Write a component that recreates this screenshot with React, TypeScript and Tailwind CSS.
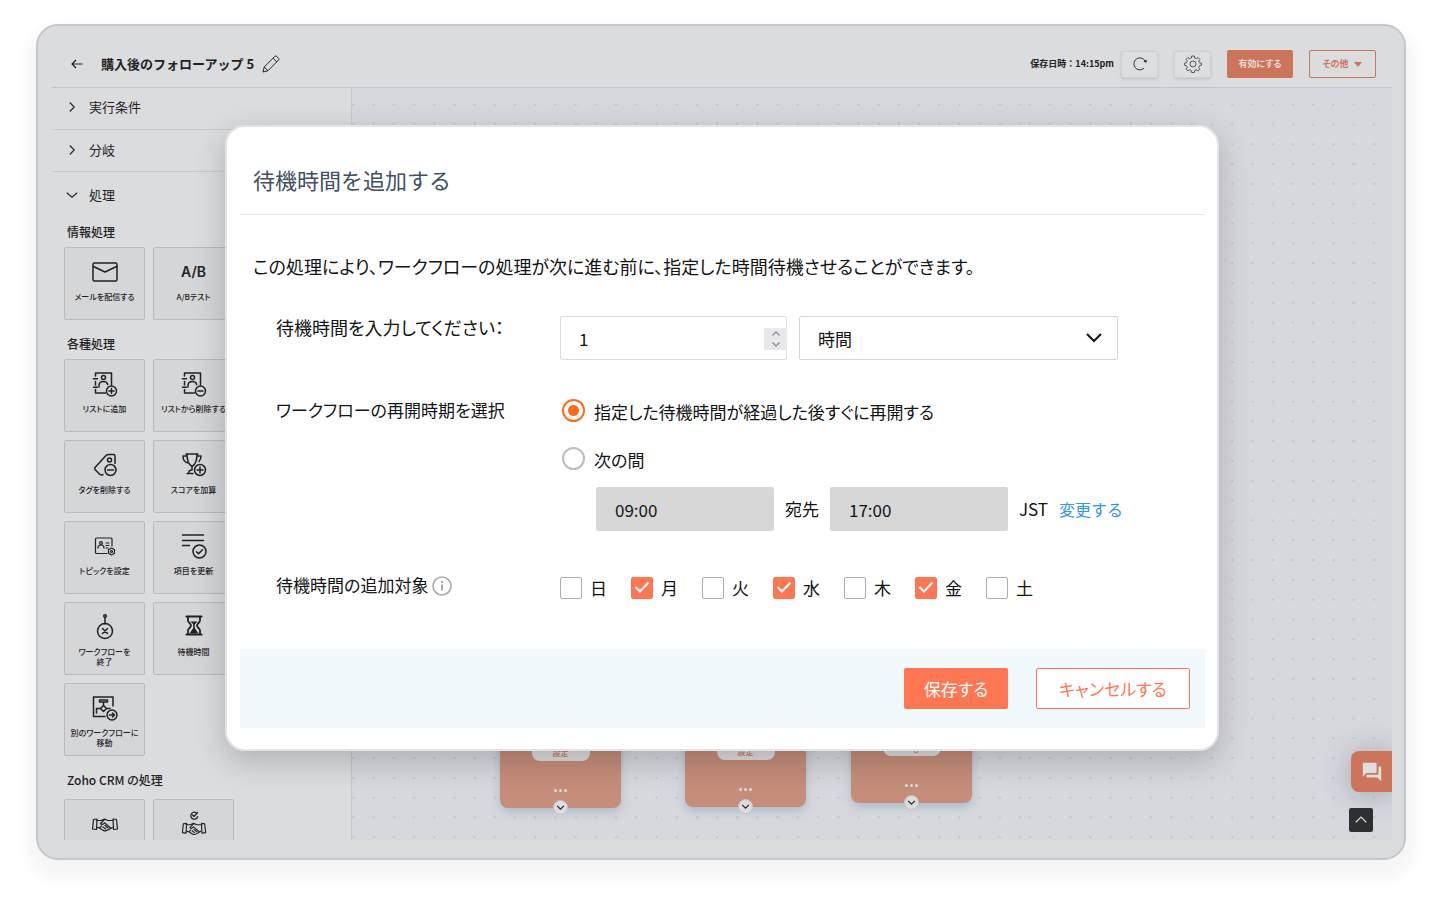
import { useState, type ReactNode } from "react";

interface IconProps {
  className?: string;
  children: ReactNode;
}

const Icon = ({ className = "w-7 h-7", children }: IconProps) => (
  <svg
    viewBox="0 0 28 28"
    className={className}
    fill="none"
    stroke="currentColor"
    strokeWidth="1.5"
    strokeLinecap="round"
    strokeLinejoin="round"
    aria-hidden="true"
  >
    {children}
  </svg>
);

const Chevron = ({ className, d = "M2 5l6 6 6-6", width = 1.5 }: { className: string; d?: string; width?: number }) => (
  <svg viewBox="0 0 16 16" className={className} fill="none" stroke="currentColor" strokeWidth={width} aria-hidden="true">
    <path d={d} />
  </svg>
);

const MailIcon = () => (
  <Icon>
    <rect x="2" y="5" width="24" height="18" rx="1.5" />
    <path d="M2.5 8.5L14 14l11.5-5.5" />
  </Icon>
);

const listBook = (
  <>
    <path d="M4.500 6V3H20.500v12M4.500 11.500v3.500M4.500 19.500V23h10" />
    <path d="M2.500 8.800h4M2.500 17.200h4" />
    <circle cx="12.5" cy="7.5" r="2" />
    <path d="M8 17v-1.500c0-2.500 2-4 4.500-4 2 0 3.800 1 4.200 3" />
    <circle cx="20.500" cy="21" r="5" />
  </>
);

const ListAddIcon = () => (
  <Icon>
    {listBook}
    <path d="M18 21h5M20.5 18.5v5" />
  </Icon>
);

const ListRemoveIcon = () => (
  <Icon>
    {listBook}
    <path d="M18 21h5" />
  </Icon>
);

const TagRemoveIcon = () => (
  <Icon>
    <path d="M12 23.500l-1 .5a2 2 0 0 1-2-.5l-5-5a1.500 1.500 0 0 1 0-2L15 4.500c.8-.8 1.700-1 3-1h4.500c1 0 1.500.5 1.500 1.500v7.500" />
    <circle cx="18.500" cy="9" r="2" />
    <circle cx="19.500" cy="19" r="5.500" />
    <path d="M16.500 19h6" />
  </Icon>
);

const ScoreAddIcon = () => (
  <Icon>
    <path d="M6 3h12M7 3c0 7 1.500 10.500 5 12.500C15.500 13.500 17 10 17 3M7 5H3c0 4 1.500 6.500 5.500 7M17 5h4c0 2.500-.5 4-2 5.500M12 15.500V19M7 22.500h6M8.500 22.500c0-2 1-3.500 3.500-3.500" />
    <circle cx="20" cy="19" r="5.500" />
    <path d="M17 19h6M20 16v6" />
  </Icon>
);

const TopicIcon = () => (
  <Icon>
    <g strokeWidth="1.200">
      <path d="M16 21.500H5.500a1 1 0 0 1-1-1V7a1 1 0 0 1 1-1H20a1 1 0 0 1 1 1v7" />
      <circle cx="10" cy="11" r="1.400" />
      <path d="M7 16c0-2 1.200-3 3-3s3 1 3 3M15 11h3M15 13.500h3M15 16h2" />
      <path d="M20.500 16l3 1.700v3.500l-3 1.700-3-1.700v-3.500z" />
      <circle cx="20.500" cy="19.500" r="1" />
    </g>
  </Icon>
);

const FieldUpdateIcon = () => (
  <Icon>
    <path d="M2.500 3h21M2.500 8.500h21M2.500 13.500h7" />
    <circle cx="19.500" cy="19.500" r="6.500" />
    <path d="M16.500 19.700l2 2 4-4" />
  </Icon>
);

const EndWorkflowIcon = () => (
  <Icon>
    <circle cx="14" cy="3" r="1.300" />
    <path d="M14 4.500V11" />
    <circle cx="14" cy="18" r="7.500" />
    <path d="M11.500 15.500l5 5M16.500 15.500l-5 5" />
  </Icon>
);

const HourglassIcon = () => (
  <Icon>
    <path d="M6.500 3.500h15M6.500 21.500h15" strokeWidth="2.200" />
    <path d="M8 4v3.500c0 2 3 3 3 5s-3 3-3 5V21M20 4v3.500c0 2-3 3-3 5s3 3 3 5V21" strokeWidth="1.800" />
    <path d="M10.500 8.500h7L14 12zM14 14l-4.500 6.500h9z" fill="currentColor" stroke="none" />
    <path d="M14 11v5" />
  </Icon>
);

const MoveWorkflowIcon = () => (
  <Icon>
    <path d="M22 12V3H2.500v19.500H14" />
    <path d="M8.500 6h8v2h-8zM12.500 8v4M12.500 11.500l3 3-3 3-3-3zM9.500 14.500H5.500V19M15.500 14.500H19" />
    <circle cx="21" cy="21" r="5" />
    <path d="M18.500 21h5M21.500 19l2 2-2 2" />
  </Icon>
);

const hands = (
  <>
    <path d="M2.500 9.500l3.500-.5-.5 10.500-4-.5zM25.500 9.500l-3.500-.5.5 10.500 4-.5z" />
    <path d="M6 10.500h4l3.500-1.500 3.500 1.500h5M5.800 17.500l2 .2 5 3c1.500.7 2.200-.3 3.500-.5 1.500 0 1.500-1 3-1.500l2-1.200M13.500 9.500l-4 4c.8 1.500 2.500 1 4-.7l6 5.200M12 17l2.500 2M14 15.500l3 2.500M9 17.500l1.500-1.500" />
  </>
);

const HandshakeIcon = () => (
  <Icon>
    <g strokeWidth="1.200">{hands}</g>
  </Icon>
);

const HandshakeCheckIcon = () => (
  <Icon>
    <g strokeWidth="1.200">
      <g transform="translate(1 5) scale(.93)">{hands}</g>
      <path d="M17 3.500a3.500 3.500 0 1 0 .7 3M12.500 5l1.500 1.500 3.500-4" />
    </g>
  </Icon>
);

const AbIcon = () => <span className="font-['Inter'] text-sm font-semibold">A/B</span>;

interface Action {
  name: string;
  caption?: string;
  icon: ReactNode;
}

const infoActions: Action[] = [
  { name: "mail", caption: "メールを配信する", icon: <MailIcon /> },
  { name: "ab-test", caption: "A/Bテスト", icon: <AbIcon /> },
];

const generalActions: Action[] = [
  { name: "list-add", caption: "リストに追加", icon: <ListAddIcon /> },
  { name: "list-remove", caption: "リストから削除する", icon: <ListRemoveIcon /> },
  { name: "tag-remove", caption: "タグを削除する", icon: <TagRemoveIcon /> },
  { name: "score-add", caption: "スコアを加算", icon: <ScoreAddIcon /> },
  { name: "topic", caption: "トピックを設定", icon: <TopicIcon /> },
  { name: "field-update", caption: "項目を更新", icon: <FieldUpdateIcon /> },
  { name: "end", caption: "ワークフローを\n終了", icon: <EndWorkflowIcon /> },
  { name: "delay", caption: "待機時間", icon: <HourglassIcon /> },
  { name: "move", caption: "別のワークフローに\n移動", icon: <MoveWorkflowIcon /> },
];

const crmActions: Action[] = [
  { name: "crm-deal", icon: <HandshakeIcon /> },
  { name: "crm-deal-check", icon: <HandshakeCheckIcon /> },
];

interface ActionGroupProps {
  title: string;
  actions: Action[];
  gridClass?: string;
}

const ActionGroup = ({ title, actions, gridClass = "mt-[3px]" }: ActionGroupProps) => (
  <section>
    <h3 className="px-[15px] text-xs leading-6 font-medium">{title}</h3>
    <div className={`mb-3 flex flex-wrap gap-2 pr-24 pl-3 ${gridClass}`}>
      {actions.map((action) => (
        <button
          key={action.name}
          aria-label={action.caption ?? action.name}
          className="flex h-[73px] w-[81px] flex-col items-center rounded-xs border border-[#b9babd] bg-[#d5d6d8]"
        >
          <span className="flex h-12 shrink-0 items-center justify-center">{action.icon}</span>
          {action.caption && (
            <span className="-mt-1 text-[8px] leading-[10px] font-medium whitespace-pre">{action.caption}</span>
          )}
        </button>
      ))}
    </div>
  </section>
);

const Sidebar = () => (
  <aside className="w-[300px] shrink-0 overflow-hidden border-r border-[#c6c7cc]">
    <button className="flex h-[42px] w-full items-center gap-[11px] border-b border-[#c9cacd] pb-1 pl-3.5 text-[13px]">
      <Chevron className="h-3 w-3" d="M5 2l6 6-6 6" />
      実行条件
    </button>
    <button className="flex h-[42px] w-full items-center gap-[11px] border-b border-[#c9cacd] pb-0.5 pl-3.5 text-[13px]">
      <Chevron className="h-3 w-3" d="M5 2l6 6-6 6" />
      分岐
    </button>
    <button className="flex h-12 w-full items-center gap-[11px] pb-0.5 pl-3.5 text-[13px]">
      <Chevron className="h-3 w-3" d="M1 5l7 6 7-6" />
      処理
    </button>
    <ActionGroup title="情報処理" actions={infoActions} />
    <ActionGroup title="各種処理" actions={generalActions} />
    <ActionGroup title="Zoho CRM の処理" actions={crmActions} gridClass="mt-[7px]" />
  </aside>
);

const TopBar = () => (
  <header className="flex h-[47px] items-center border-b border-[#c3c4ca] pr-4 pl-[19px]">
    <button aria-label="戻る">
      <svg viewBox="0 0 12 12" className="h-3 w-3" fill="none" stroke="currentColor" strokeWidth="1.2" aria-hidden="true">
        <path d="M11.500 6H1M5 2L1 6l4 4" />
      </svg>
    </button>
    <h1 className="ml-[18px] text-[13px] font-bold [font-feature-settings:normal]">購入後のフォローアップ 5</h1>
    <button aria-label="名前を編集" className="ml-2">
      <svg viewBox="0 0 18 18" className="h-[18px] w-[18px]" fill="none" stroke="currentColor" strokeLinejoin="round" aria-hidden="true">
        <path d="M1 17l1.200-5L13 1.200a1 1 0 0 1 1.400 0l2.300 2.300a1 1 0 0 1 0 1.400L6 15.700zM2.200 12L6 15.700M11 3.200l3.800 3.800" />
      </svg>
    </button>
    <span className="ml-auto text-[9px] font-bold [font-feature-settings:normal]">保存日時：14:15pm</span>
    <div className="ml-[7px] flex items-center gap-4">
      <button aria-label="再読み込み" className="flex h-[27px] w-[37px] items-center justify-center rounded-xs border border-[#d0d1d4] bg-[#dddee0] shadow-sm">
        <svg viewBox="0 0 14 14" className="h-3.5 w-3.5" fill="none" stroke="currentColor" strokeWidth=".9" aria-hidden="true">
          <path d="M11 11.200A6 6 0 1 1 12.600 5" />
          <path d="M10.500 4.500l3 1.200.2-3z" fill="currentColor" stroke="none" />
        </svg>
      </button>
      <button aria-label="設定" className="flex h-[27px] w-[37px] items-center justify-center rounded-xs border border-[#d0d1d4] bg-[#dddee0] shadow-sm">
        <svg viewBox="0 0 18 18" className="h-[18px] w-[18px]" fill="none" stroke="currentColor" strokeWidth=".7" strokeLinejoin="round" aria-hidden="true">
          <path d="M7.700 1h2.600l.4 2 1.600.7 1.800-1.200 1.800 1.900-1.200 1.700.7 1.600 2 .4v2.200l-2 .5-.7 1.600 1.200 1.800-1.800 1.800-1.800-1.200-1.600.7-.4 2H7.700l-.4-2-1.600-.7-1.800 1.200-1.800-1.800 1.200-1.800-.7-1.600-2-.5V8.100l2-.4.7-1.600-1.200-1.700 1.800-1.900 1.800 1.200 1.600-.7z" />
          <circle cx="9" cy="9" r="3" />
        </svg>
      </button>
      <button className="h-7 w-[66px] rounded-xs bg-[#cd745b] text-[9px] font-bold text-[#e6dcda]">有効にする</button>
      <button className="flex h-7 w-[67px] items-center justify-center gap-1.5 rounded-xs border border-[#cd745b] text-[9px] font-bold text-[#cd745b]">
        その他
        <svg viewBox="0 0 8 5" className="h-[5px] w-2" fill="currentColor" aria-hidden="true">
          <path d="M0 0h8L4 5z" />
        </svg>
      </button>
    </div>
  </header>
);

const FlowNode = ({ label, className }: { label: string; className: string }) => (
  <div
    className={`absolute flex h-[121px] w-[121px] flex-col items-center rounded-lg bg-[#c58d7a] pt-[52px] shadow-[0_4px_10px_rgba(120,150,175,0.45)] ${className}`}
  >
    <span className="flex h-[22px] w-[58px] shrink-0 items-center justify-center rounded-lg bg-[#dcdcdc] pt-1.5 text-[8px] font-medium text-[#cd745b]">
      {label}
    </span>
    <span className="mt-7 flex gap-[2px]">
      <i className="h-[3px] w-[3px] rounded-full bg-[#dedede]" />
      <i className="h-[3px] w-[3px] rounded-full bg-[#dedede]" />
      <i className="h-[3px] w-[3px] rounded-full bg-[#dedede]" />
    </span>
    <button aria-label="展開" className="absolute -bottom-[7px] flex h-[15px] w-[15px] items-center justify-center rounded-full border border-[#c3c4c6] bg-[#dcdddf]">
      <Chevron className="h-[9px] w-[9px]" d="M2 5l6 6 6-6" width={2} />
    </button>
  </div>
);

const Canvas = () => (
  <main className="relative flex-1 overflow-hidden bg-[#d7d8de]">
    <svg className="absolute inset-0 h-full w-full" aria-hidden="true">
      <defs>
        <pattern id="dots-a" x="-8.500" y="6.700" width="20.2" height="19.8" patternUnits="userSpaceOnUse">
          <circle cx="10" cy="10" r="1.1" fill="#bfc0c7" />
        </pattern>
        <pattern id="dots-b" x="667.700" y="6.700" width="20.25" height="19.8" patternUnits="userSpaceOnUse">
          <circle cx="10" cy="10" r="1.1" fill="#bfc0c7" />
        </pattern>
      </defs>
      <rect width="672" height="100%" fill="url(#dots-a)" />
      <rect x="672" width="100%" height="100%" fill="url(#dots-b)" />
    </svg>
    <FlowNode label="設定" className="top-[599px] left-[148px]" />
    <FlowNode label="設定" className="top-[598px] left-[333px]" />
    <FlowNode label="Tag" className="top-[594px] left-[499px]" />
    <button
      aria-label="チャット"
      className="absolute right-0 bottom-12 flex h-[41px] w-[41px] items-center justify-center rounded-l-lg bg-[#cd745b] shadow-[0_2px_28px_rgba(60,70,90,0.35)]"
    >
      <svg viewBox="0 0 24 24" className="h-[22px] w-[22px]" fill="#dedfe1" aria-hidden="true">
        <path d="M21 6h-2v9H6v2c0 .550.450 1 1 1h11l4 4V7c0-.55-.45-1-1-1zm-4 6V3c0-.55-.45-1-1-1H3c-.55 0-1 .45-1 1v14l4-4h10c.55 0 1-.45 1-1z" />
      </svg>
    </button>
    <button aria-label="上へ戻る" className="absolute right-[19px] bottom-2 flex h-6 w-6 items-center justify-center rounded-xs bg-[#2d2f31] text-[#dedfe1]">
      <Chevron className="h-3 w-3" d="M1 11l7-7 7 7" />
    </button>
  </main>
);

const days = [
  { label: "日", on: false },
  { label: "月", on: true },
  { label: "火", on: false },
  { label: "水", on: true },
  { label: "木", on: false },
  { label: "金", on: true },
  { label: "土", on: false },
];

const DelayDialog = () => {
  const [amount, setAmount] = useState(1);

  return (
    <div
      role="dialog"
      aria-labelledby="delay-title"
      className="w-full max-w-[994px] rounded-[20px] border-2 border-[#e4e4e8] bg-white pr-3 pb-[21px] pl-[13px] text-[17px] leading-[22px] text-[#111315] shadow-[0_10px_32px_rgba(0,0,0,0.2)]"
    >
      <div className="border-b border-[#e8e8ea] px-[13px] pt-[35px] pb-[18px]">
        <h2 id="delay-title" className="text-[22px] leading-[34px] text-[#415063] [font-feature-settings:normal]">
          待機時間を追加する
        </h2>
      </div>

      <p className="mt-10 px-[13px] text-lg leading-[22px]">
        この処理により、ワークフローの処理が次に進む前に、指定した時間待機させることができます。
      </p>

      <div className="mt-[39px] grid grid-cols-[284px_1fr] pl-9">
        <label htmlFor="amount" className="text-lg leading-[22px]">
          待機時間を入力してください：
        </label>
        <div className="flex gap-3">
          <div className="relative w-[227px]">
            <input
              id="amount"
              type="number"
              value={amount}
              onChange={(e) => setAmount(Number(e.target.value))}
              className="h-11 w-full appearance-none rounded-xs border border-[#dcdcde] pr-8 pl-[18px] [-moz-appearance:textfield] [&::-webkit-inner-spin-button]:appearance-none"
            />
            <div className="absolute top-3 right-0 flex h-[22px] w-[23px] flex-col items-center justify-center gap-0.5 bg-[#e8e7ec] text-[#8b8b93]">
              <button aria-label="増やす" onClick={() => setAmount(amount + 1)}>
                <Chevron className="h-2 w-2.5" d="M1 11l7-7 7 7" width={2.5} />
              </button>
              <button aria-label="減らす" onClick={() => setAmount(amount - 1)}>
                <Chevron className="h-2 w-2.5" d="M1 5l7 7 7-7" width={2.5} />
              </button>
            </div>
          </div>
          <div className="relative w-[319px]">
            <select aria-label="単位" className="h-11 w-full appearance-none rounded-xs border border-[#d6d6d8] bg-white px-[18px] pt-0.5">
              <option>時間</option>
              <option>日</option>
            </select>
            <Chevron className="pointer-events-none absolute top-3.5 right-4 h-4 w-4" d="M1 4l7 7 7-7" width={2} />
          </div>
        </div>
      </div>

      <div role="radiogroup" aria-labelledby="resume-label" className="mt-[39px] grid grid-cols-[284px_1fr] pl-9">
        <span id="resume-label">ワークフローの再開時期を選択</span>
        <div className="flex flex-col items-start gap-[22px]">
          <label className="flex gap-[9px]">
            <input
              type="radio"
              name="resume"
              defaultChecked
              className="ml-0.5 h-[23px] w-[23px] shrink-0 appearance-none rounded-full border-2 border-[#bdbdbf] checked:border-[#ff6a1f] checked:bg-radial checked:from-[#ff6a1f] checked:from-[5px] checked:to-white checked:to-[6px]"
            />
            <span className="leading-[26px]">指定した待機時間が経過した後すぐに再開する</span>
          </label>
          <label className="flex gap-[9px]">
            <input
              type="radio"
              name="resume"
              className="ml-0.5 h-[23px] w-[23px] shrink-0 appearance-none rounded-full border-2 border-[#bdbdbf] checked:border-[#ff6a1f] checked:bg-radial checked:from-[#ff6a1f] checked:from-[5px] checked:to-white checked:to-[6px]"
            />
            <span className="leading-[26px]">次の間</span>
          </label>
        </div>
        <div className="col-start-2 mt-3.5 flex items-center gap-[11px] pl-9">
          <input aria-label="開始時刻" defaultValue="09:00" className="h-11 w-[178px] rounded-xs bg-[#d7d7d7] px-[19px]" />
          <span>宛先</span>
          <input aria-label="終了時刻" defaultValue="17:00" className="h-11 w-[178px] rounded-xs bg-[#d7d7d7] px-[19px]" />
          <span>JST</span>
          <a href="#timezone" className="text-base text-[#2f97ee] [font-feature-settings:normal]">
            変更する
          </a>
        </div>
      </div>

      <div role="group" aria-labelledby="days-label" className="mt-[43px] grid grid-cols-[284px_1fr] pl-9">
        <div className="flex items-start gap-1">
          <span id="days-label">待機時間の追加対象</span>
          <svg viewBox="0 0 20 20" className="mt-0.5 h-5 w-5" fill="none" stroke="#a9a9ab" strokeWidth="1.6" aria-label="情報">
            <circle cx="10" cy="10" r="9" />
            <path d="M10 8.500V14.500M10 5v2" strokeWidth="2" />
          </svg>
        </div>
        <div className="flex pt-[3px]">
          {days.map((day) => (
            <label key={day.label} className="relative flex w-[71px] items-center gap-2">
              <input
                type="checkbox"
                defaultChecked={day.on}
                className="peer h-[22px] w-[22px] appearance-none rounded-xs border border-[#adadaf] checked:border-[#ff7752] checked:bg-[#ff7752]"
              />
              <svg
                viewBox="0 0 22 22"
                className="pointer-events-none absolute left-0 hidden h-[22px] w-[22px] peer-checked:block"
                fill="none"
                stroke="white"
                strokeWidth="2"
                aria-hidden="true"
              >
                <path d="M4.500 10l4.500 4.500 8.500-9" />
              </svg>
              {day.label}
            </label>
          ))}
        </div>
      </div>

      <div className="mt-[50px] flex h-[79px] items-center justify-end gap-7 bg-[#f1f9fd] px-[15px]">
        <button className="h-[41px] w-[104px] rounded-xs bg-[#ff7752] text-white">保存する</button>
        <button className="h-[41px] w-[154px] rounded-xs border border-[#ff7752] bg-white text-[#ff7752]">キャンセルする</button>
      </div>
    </div>
  );
};

const App = () => (
  <div className="flex h-screen min-h-[640px] bg-white px-9 pt-6 pb-12 font-['Noto_Sans_CJK_JP',sans-serif] text-[#1f2225] [font-feature-settings:'palt']">
    <div className="relative flex flex-1 flex-col rounded-[22px] border-2 border-[#c6c7ce] bg-[#dbdcde] pt-[15px] pr-3 pb-[18px] pl-3.5 shadow-[0_11px_14px_8px_rgba(0,0,0,0.04)]">
      <TopBar />
      <div className="flex min-h-0 flex-1">
        <Sidebar />
        <Canvas />
      </div>
      <div className="absolute inset-0 flex items-center justify-center pb-2 pl-0.5">
        <DelayDialog />
      </div>
    </div>
  </div>
);

export default App;
